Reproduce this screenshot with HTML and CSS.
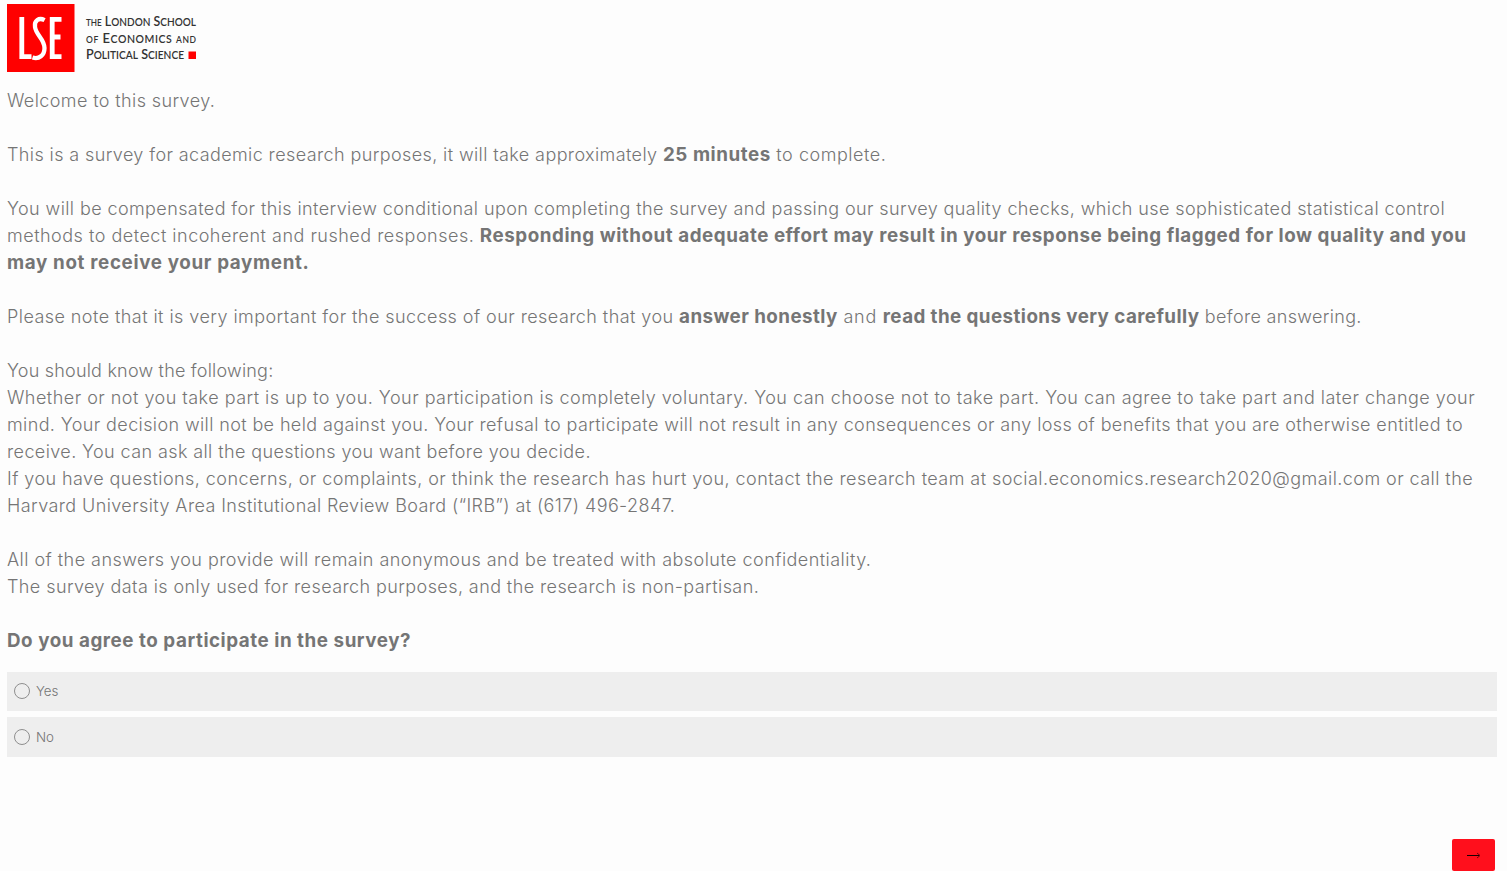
FILE: index.html
```html
<!DOCTYPE html>
<html lang="en"><head><meta charset="utf-8"><title>Survey</title><link rel="stylesheet" href="styles.css"></head>
<body>
<header class="logo"><svg width="190" height="68" viewBox="0 0 190 68" role="img">
<rect width="67.5" height="68" fill="#f00"/>
<g fill="none" stroke="#fff" stroke-width="4.8"><path d="M14.8 13V52.6H24.5"/><path d="M37.6 16.2C32 13.2 27 16.5 28 23C29 31 37.5 35 37.5 44C37.5 51.5 32 55.5 25.5 53.5" stroke-width="4.3"/><path d="M54.5 15.3H45.2V52.6H54.5M45.2 33H53.5"/></g>
<g class="logo-text"><text x="79" y="22" textLength="110" lengthAdjust="spacingAndGlyphs"><tspan class="sc">THE</tspan> L<tspan class="cap">ONDON</tspan> S<tspan class="cap">CHOOL</tspan></text>
<text x="79" y="38.5" textLength="110" lengthAdjust="spacing"><tspan class="sc">OF</tspan> E<tspan class="cap">CONOMICS</tspan> <tspan class="sc">AND</tspan></text>
<text x="79" y="54.8" textLength="98" lengthAdjust="spacingAndGlyphs">P<tspan class="cap">OLITICAL</tspan> S<tspan class="cap">CIENCE</tspan></text></g>
<rect x="181.5" y="47.5" width="7.5" height="7.5" fill="#f00"/></svg></header>
<main>
<div class="copy">
<p><span class="s39">Welcome to this survey.</span></p>
<p><span class="s39">This is a survey for academic research purposes, it will take approximately </span><b>25 minutes</b><span class="s54"> to complete.</span></p>
<p><span class="s40">You will be compensated for this interview conditional upon completing the survey and passing our survey quality checks, which use sophisticated statistical control</span><br>
<span class="s50">methods to detect incoherent and rushed responses. </span><b>Responding without adequate effort may result in your response being flagged for low quality and you</b><br>
<b class="s107">may not receive your payment.</b></p>
<p><span class="s44">Please note that it is very important for the success of our research that you </span><b class="s83">answer honestly</b><span class="s70"> and </span><b class="s83">read the questions very carefully</b><span class="s33"> before answering.</span></p>
<p><span class="s20">You should know the following:</span><br>
<span class="s48">Whether or not you take part is up to you. Your participation is completely voluntary. You can choose not to take part. You can agree to take part and later change your</span><br>
<span class="s38">mind. Your decision will not be held against you. Your refusal to participate will not result in any consequences or any loss of benefits that you are otherwise entitled to</span><br>
<span class="s39">receive. You can ask all the questions you want before you decide.</span><br>
<span class="s44">If you have questions, concerns, or complaints, or think the research has hurt you, contact the research team at social.economics.research2020@gmail.com or call the</span><br>
<span class="s40">Harvard University Area Institutional Review Board (“IRB”) at (617) 496-2847.</span></p>
<p><span class="s46">All of the answers you provide will remain anonymous and be treated with absolute confidentiality.</span><br>
<span class="s41">The survey data is only used for research purposes, and the research is non-partisan.</span></p>
<p><b>Do you agree to participate in the survey?</b></p>
</div>
<div class="choices">
<div class="choice first"><i class="radio"></i><span>Yes</span></div>
<div class="choice"><i class="radio"></i><span>No</span></div>
</div>
</main>
<footer><div class="next"><svg width="14" height="8" viewBox="0 0 14 8"><path d="M0 4.5H12" stroke="#1a0002" stroke-width="1"/><path d="M10 2L13 4.5L10 7" fill="none" stroke="#1a0002" stroke-opacity=".7" stroke-width=".9"/></svg></div></footer>
</body></html>
```
FILE: styles.css
```css
body{margin:0;padding:4px 10px 0 7px;height:867px;overflow:hidden;background:#fdfdfd;font-family:Inter,sans-serif;color:#757575}
.logo{height:83px}
.logo svg{display:block}
.logo-text{font:600 13px Lato,sans-serif;fill:#333}
.sc{font-size:8.5px}
.cap{font-size:10.5px}
.copy{font-size:18px;line-height:27px;font-weight:300;white-space:nowrap}
.copy p{margin:0 0 27px}
.copy p:last-child{margin-bottom:18px}
.copy b{font-weight:700;font-size:18.8px;line-height:0;letter-spacing:.548px}
.s20{letter-spacing:.2px}
.s33{letter-spacing:.33px}
.s38{letter-spacing:.384px}
.s39{letter-spacing:.392px}
.s40{letter-spacing:.404px}
.s41{letter-spacing:.41px}
.s44{letter-spacing:.437px}
.s46{letter-spacing:.46px}
.s48{letter-spacing:.476px}
.s50{letter-spacing:.5px}
.s54{letter-spacing:.54px}
.s70{letter-spacing:.7px}
.copy .s83{letter-spacing:.43px}
.copy .s107{letter-spacing:.65px}
.choices{display:flex;flex-direction:column;gap:6px}
.choice{display:flex;align-items:center;gap:6px;box-sizing:border-box;height:40px;padding-left:7px;background:#eee;font-size:13.3px;font-weight:300;line-height:16px;color:#757575}
.choice.first{height:39px;padding-bottom:1px}
.choice span{padding-bottom:1px}
.radio{box-sizing:border-box;width:16px;height:16px;border:1px solid #8e8e8e;border-radius:50%}
footer{display:flex;justify-content:flex-end;padding:82px 2px 0 0}
.next{display:flex;align-items:center;justify-content:center;width:43px;height:32px;border-radius:2px;background:#ff0f1c}
```
